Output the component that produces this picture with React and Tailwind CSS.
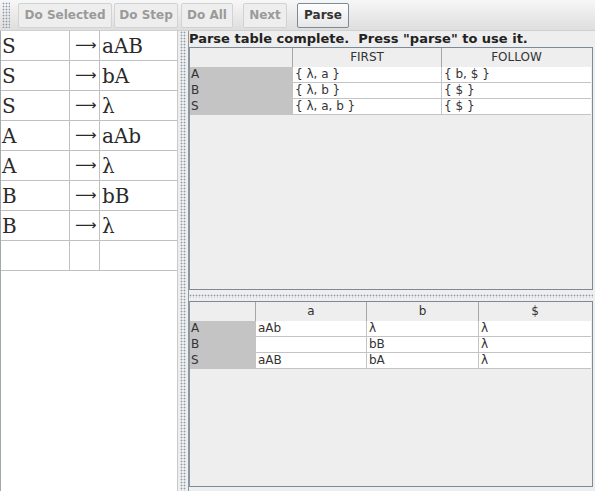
import React from "react";

const grammar = [
  ["S", "aAB"],
  ["S", "bA"],
  ["S", "λ"],
  ["A", "aAb"],
  ["A", "λ"],
  ["B", "bB"],
  ["B", "λ"],
];

const firstFollow = [
  ["A", "{ λ, a }", "{ b, $ }"],
  ["B", "{ λ, b }", "{ $ }"],
  ["S", "{ λ, a, b }", "{ $ }"],
];

const parseTable = [
  ["A", "aAb", "λ", "λ"],
  ["B", "", "bB", "λ"],
  ["S", "aAB", "bA", "λ"],
];

const dots = "bg-[radial-gradient(circle,#8d9bab_0.8px,transparent_1.1px)] bg-[length:3px_3px]";

function ToolButton({ label, width, enabled }) {
  return (
    <div
      className={`h-[25px] flex items-center justify-center rounded-[2px] border text-[12px] font-bold ${width} ${
        enabled
          ? "border-[#7a8a99] bg-gradient-to-b from-[#ffffff] to-[#e6e6e6] text-[#333333]"
          : "border-[#d2d2d2] bg-[#eeeeee] text-[#9a9a9a]"
      }`}
    >
      {label}
    </div>
  );
}

export default function App() {
  return (
    <div
      className="w-[595px] h-[491px] overflow-hidden bg-[#eeeeee] flex flex-col"
      style={{ fontFamily: '"DejaVu Sans", sans-serif' }}
    >
      {/* toolbar */}
      <div className="h-[31px] flex items-center bg-gradient-to-b from-[#f7f7f7] to-[#dedede] border-b border-[#d0d0d0]">
        <div className={`ml-[2px] w-[8px] h-[26px] ${dots}`}></div>
        <div className="ml-[8px] flex items-center">
          <ToolButton label="Do Selected" width="w-[94px]" />
          <div className="ml-[2px]"><ToolButton label="Do Step" width="w-[64px]" /></div>
          <div className="ml-[3px]"><ToolButton label="Do All" width="w-[52px]" /></div>
          <div className="ml-[10px]"><ToolButton label="Next" width="w-[44px]" /></div>
          <div className="ml-[10px]"><ToolButton label="Parse" width="w-[52px]" enabled /></div>
        </div>
      </div>

      <div className="flex-1 flex min-h-0">
        {/* grammar */}
        <div className="w-[178px] bg-white border-l border-[#a0a8b0] border-r border-r-[#c8c8c8]">
          {grammar.concat([["", ""]]).map(([lhs, rhs], i) => (
            <div
              key={i}
              className="h-[30px] grid grid-cols-[69px_30px_77px] border-b border-[#c0c0c0] text-[20px] text-[#2a2a2a] leading-[30px]"
              style={{ fontFamily: '"DejaVu Serif", serif' }}
            >
              <div className="border-r border-[#c0c0c0] pl-[1px]">{lhs}</div>
              <div
                className="border-r border-[#c0c0c0] pl-[5px] text-[15px] leading-[29px] overflow-hidden whitespace-nowrap"
                style={{ fontFamily: '"DejaVu Sans", sans-serif' }}
              >
                {lhs ? "⟶" : ""}
              </div>
              <div className="pl-[2px]">{rhs}</div>
            </div>
          ))}
        </div>

        {/* vertical splitter */}
        <div className="w-[10px] flex justify-center">
          <div className={`w-[6px] h-full ${dots}`}></div>
        </div>

        {/* right side */}
        <div className="flex-1 flex flex-col border-l border-[#8a96a3] pr-[2px]">
          <div className="h-[16px] text-[13px] font-bold text-[#222222] leading-[16px] whitespace-pre">
            {'Parse table complete.  Press "parse" to use it.'}
          </div>
          <div className="h-[243px] border border-[#7a8a99] border-l-[#8a96a3] flex flex-col">
            <div className="grid grid-cols-[103px_149px_149px] h-[19px] text-[12px] text-[#333333] leading-[19px]">
              <div className="bg-[#eeeeee] border-r border-b border-[#a6a6a6]"></div>
              <div className="bg-[#eeeeee] border-r border-b border-[#a6a6a6] text-center">FIRST</div>
              <div className="bg-[#eeeeee] border-b border-[#a6a6a6] text-center">FOLLOW</div>
            </div>
            {firstFollow.map(([v, f, fo]) => (
              <div key={v} className="grid grid-cols-[103px_149px_149px] h-[16px] text-[12px] text-[#333333] leading-[15px]">
                <div className="bg-[#c4c4c4] pl-[1px] border-b border-[#c4c4c4]">{v}</div>
                <div className="bg-white pl-[2px] border-r border-b border-[#c4c4c4]">{f}</div>
                <div className="bg-white pl-[2px] border-b border-[#c4c4c4]">{fo}</div>
              </div>
            ))}
          </div>

          {/* horizontal splitter */}
          <div className="h-[11px] flex items-center">
            <div className={`w-full h-[4px] ${dots}`}></div>
          </div>

          <div className="h-[186px] border border-[#7a8a99] border-l-[#8a96a3] flex flex-col">
            <div className="grid grid-cols-[66px_111px_112px_112px] h-[19px] text-[12px] text-[#333333] leading-[19px]">
              <div className="bg-[#eeeeee] border-r border-b border-[#a6a6a6]"></div>
              <div className="bg-[#eeeeee] border-r border-b border-[#a6a6a6] text-center">a</div>
              <div className="bg-[#eeeeee] border-r border-b border-[#a6a6a6] text-center">b</div>
              <div className="bg-[#eeeeee] border-b border-[#a6a6a6] text-center">$</div>
            </div>
            {parseTable.map(([v, a, b, d]) => (
              <div key={v} className="grid grid-cols-[66px_111px_112px_112px] h-[16px] text-[12px] text-[#333333] leading-[15px]">
                <div className="bg-[#c4c4c4] pl-[1px] border-b border-[#c4c4c4]">{v}</div>
                <div className="bg-white pl-[2px] border-r border-b border-[#c4c4c4]">{a}</div>
                <div className="bg-white pl-[2px] border-r border-b border-[#c4c4c4]">{b}</div>
                <div className="bg-white pl-[2px] border-b border-[#c4c4c4]">{d}</div>
              </div>
            ))}
          </div>
        </div>
      </div>
    </div>
  );
}
